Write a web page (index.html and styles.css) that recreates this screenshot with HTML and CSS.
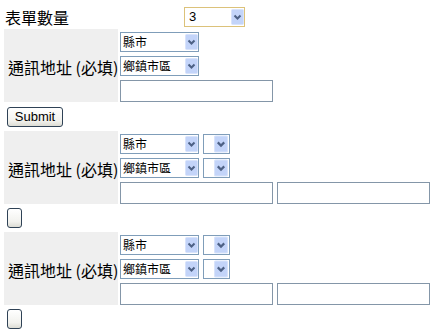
FILE: index.html
```html
<!DOCTYPE html>
<html lang="zh-Hant">

<head>
  <meta charset="UTF-8" />
  <title>通訊地址表單</title>
  <link rel="stylesheet" href="styles.css">
</head>

<body>
  <div class="page">
    <!-- 表單數量 -->
    <div class="count-row">
      <span class="count-label">表單數量</span>
      <span class="sel-wrap sel-count">
        <select class="sel sel-focus">
          <option>3</option>
        </select>
        <svg class="arrow" viewBox="0 0 13 16"><rect x="0.5" y="0.5" width="12" height="15" rx="1" fill="#c3d4f9" stroke="#d8e3fb" /><polyline points="3.5,6.5 6.5,9.5 9.5,6.5" fill="none" stroke="#4d6185" stroke-width="2" /></svg>
      </span>
    </div>

    <!-- 表單 1 -->
    <form class="addr-form">
      <div class="addr-row">
        <div class="addr-label">通訊地址 (必填)</div>
        <div class="addr-fields">
          <div class="sel-line">
            <span class="sel-wrap sel-city">
              <select class="sel"><option>縣市</option></select>
              <svg class="arrow" viewBox="0 0 13 16"><rect x="0.5" y="0.5" width="12" height="15" rx="1" fill="#c3d4f9" stroke="#d8e3fb" /><polyline points="3.5,6.5 6.5,9.5 9.5,6.5" fill="none" stroke="#4d6185" stroke-width="2" /></svg>
            </span>
          </div>
          <div class="sel-line">
            <span class="sel-wrap sel-city">
              <select class="sel"><option>鄉鎮市區</option></select>
              <svg class="arrow" viewBox="0 0 13 16"><rect x="0.5" y="0.5" width="12" height="15" rx="1" fill="#c3d4f9" stroke="#d8e3fb" /><polyline points="3.5,6.5 6.5,9.5 9.5,6.5" fill="none" stroke="#4d6185" stroke-width="2" /></svg>
            </span>
          </div>
          <div class="input-line">
            <input type="text" class="txt">
          </div>
        </div>
      </div>
      <button type="submit" class="btn">Submit</button>
    </form>

    <!-- 表單 2 -->
    <form class="addr-form">
      <div class="addr-row">
        <div class="addr-label">通訊地址 (必填)</div>
        <div class="addr-fields">
          <div class="sel-line">
            <span class="sel-wrap sel-city">
              <select class="sel"><option>縣市</option></select>
              <svg class="arrow" viewBox="0 0 13 16"><rect x="0.5" y="0.5" width="12" height="15" rx="1" fill="#c3d4f9" stroke="#d8e3fb" /><polyline points="3.5,6.5 6.5,9.5 9.5,6.5" fill="none" stroke="#4d6185" stroke-width="2" /></svg>
            </span>
            <span class="sel-wrap sel-mini">
              <select class="sel"><option></option></select>
              <svg class="arrow" viewBox="0 0 13 16"><rect x="0.5" y="0.5" width="12" height="15" rx="1" fill="#c3d4f9" stroke="#d8e3fb" /><polyline points="3.5,6.5 6.5,9.5 9.5,6.5" fill="none" stroke="#4d6185" stroke-width="2" /></svg>
            </span>
          </div>
          <div class="sel-line">
            <span class="sel-wrap sel-city">
              <select class="sel"><option>鄉鎮市區</option></select>
              <svg class="arrow" viewBox="0 0 13 16"><rect x="0.5" y="0.5" width="12" height="15" rx="1" fill="#c3d4f9" stroke="#d8e3fb" /><polyline points="3.5,6.5 6.5,9.5 9.5,6.5" fill="none" stroke="#4d6185" stroke-width="2" /></svg>
            </span>
            <span class="sel-wrap sel-mini">
              <select class="sel"><option></option></select>
              <svg class="arrow" viewBox="0 0 13 16"><rect x="0.5" y="0.5" width="12" height="15" rx="1" fill="#c3d4f9" stroke="#d8e3fb" /><polyline points="3.5,6.5 6.5,9.5 9.5,6.5" fill="none" stroke="#4d6185" stroke-width="2" /></svg>
            </span>
          </div>
          <div class="input-line">
            <input type="text" class="txt">
            <input type="text" class="txt">
          </div>
        </div>
      </div>
      <button type="submit" class="btn btn-empty"></button>
    </form>

    <!-- 表單 3 -->
    <form class="addr-form">
      <div class="addr-row">
        <div class="addr-label">通訊地址 (必填)</div>
        <div class="addr-fields">
          <div class="sel-line">
            <span class="sel-wrap sel-city">
              <select class="sel"><option>縣市</option></select>
              <svg class="arrow" viewBox="0 0 13 16"><rect x="0.5" y="0.5" width="12" height="15" rx="1" fill="#c3d4f9" stroke="#d8e3fb" /><polyline points="3.5,6.5 6.5,9.5 9.5,6.5" fill="none" stroke="#4d6185" stroke-width="2" /></svg>
            </span>
            <span class="sel-wrap sel-mini">
              <select class="sel"><option></option></select>
              <svg class="arrow" viewBox="0 0 13 16"><rect x="0.5" y="0.5" width="12" height="15" rx="1" fill="#c3d4f9" stroke="#d8e3fb" /><polyline points="3.5,6.5 6.5,9.5 9.5,6.5" fill="none" stroke="#4d6185" stroke-width="2" /></svg>
            </span>
          </div>
          <div class="sel-line">
            <span class="sel-wrap sel-city">
              <select class="sel"><option>鄉鎮市區</option></select>
              <svg class="arrow" viewBox="0 0 13 16"><rect x="0.5" y="0.5" width="12" height="15" rx="1" fill="#c3d4f9" stroke="#d8e3fb" /><polyline points="3.5,6.5 6.5,9.5 9.5,6.5" fill="none" stroke="#4d6185" stroke-width="2" /></svg>
            </span>
            <span class="sel-wrap sel-mini">
              <select class="sel"><option></option></select>
              <svg class="arrow" viewBox="0 0 13 16"><rect x="0.5" y="0.5" width="12" height="15" rx="1" fill="#c3d4f9" stroke="#d8e3fb" /><polyline points="3.5,6.5 6.5,9.5 9.5,6.5" fill="none" stroke="#4d6185" stroke-width="2" /></svg>
            </span>
          </div>
          <div class="input-line">
            <input type="text" class="txt">
            <input type="text" class="txt">
          </div>
        </div>
      </div>
      <button type="submit" class="btn btn-empty"></button>
    </form>
  </div>
</body>

</html>
```

FILE: styles.css
```css
/* 초기화 */
html,
body,
form {
  margin: 0;
  padding: 0;
}

body {
  background-color: #fff;
  color: #000;
  font-family: "Noto Sans CJK TC", "Liberation Sans", sans-serif;
}

/* 전체 박스 */
.page {
  padding: 6px 0 0 4px;
  display: flex;
  flex-direction: column;
}

/* 표單數量 줄 */
.count-row {
  display: flex;
  align-items: center;
  height: 22px;
  margin-bottom: 1px;
}

.count-label {
  width: 179px;
  padding-left: 1px;
  font-size: 16px;
  line-height: 20px;
}

/* 셀렉트 공통 */
.sel-wrap {
  position: relative;
  display: block;
  height: 20px;
}

.sel {
  appearance: none;
  -webkit-appearance: none;
  display: block;
  width: 100%;
  height: 20px;
  margin: 0;
  padding: 0 0 0 2px;
  border: 1px solid #7f9db9;
  border-radius: 0;
  background-color: #fff;
  color: #000;
  font-family: "Noto Sans CJK TC", "Liberation Sans", sans-serif;
  font-size: 12px;
  line-height: 18px;
  outline: none;
}

/* 드롭다운 화살표 */
.arrow {
  position: absolute;
  top: 1px;
  right: 1px;
  width: 13px;
  height: 18px;
  pointer-events: none;
}

.sel-count {
  width: 61px;
}

.sel-count .sel {
  padding-left: 4px;
  font-family: "Liberation Sans", sans-serif;
  font-size: 13px;
  border-color: #dcc27a;
}

.sel-city {
  width: 79px;
}

.sel-mini {
  width: 27px;
}

.sel-mini .arrow {
  width: 14px;
  right: 2px;
}

/* 주소 행 */
.addr-row {
  display: flex;
  gap: 2px;
  height: 73px;
}

.addr-label {
  width: 114px;
  display: flex;
  align-items: center;
  padding-left: 4px;
  box-sizing: border-box;
  background-color: #efefef;
  font-size: 16px;
  line-height: 20px;
  white-space: nowrap;
  padding-top: 3px;
}

.addr-fields {
  display: flex;
  flex-direction: column;
  gap: 4px;
  padding-top: 3px;
}

.sel-line,
.input-line {
  display: flex;
  gap: 4px;
}

.txt {
  width: 153px;
  height: 22px;
  margin: 0;
  padding: 0 2px;
  box-sizing: border-box;
  border: 1px solid #8496a8;
  background-color: #fff;
  outline: none;
}

/* 버튼 */
.btn {
  align-self: flex-start;
  margin: 4px 0 4px 3px;
  height: 20px;
  width: 56px;
  padding: 0;
  border: 1px solid #2f4256;
  border-radius: 3px;
  background: linear-gradient(#ffffff, #f2f2ee 70%, #dcdcd4);
  color: #000;
  font-family: "Liberation Sans", sans-serif;
  font-size: 13px;
  line-height: 18px;
}

.btn-empty {
  width: 15px;
}
```
